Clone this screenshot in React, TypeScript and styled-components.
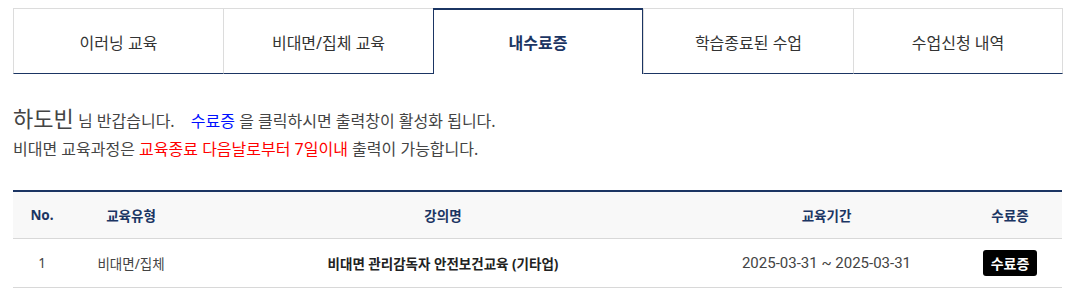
import React from 'react'
import styled, { createGlobalStyle } from 'styled-components'

const GlobalStyle = createGlobalStyle`
    body {
        margin: 0;
        background: #fff;
        font-family: "Noto Sans", "Noto Sans CJK KR", sans-serif;
        color: #333;
    }
`

const Page = styled.div`
    padding: 8px 12px 0 13px;
`

const Tabs = styled.ul`
    display: grid;
    grid-template-columns: repeat(5, 1fr);
    list-style: none;
    margin: 0;
    padding: 0;
    width: 1050px;
`

const Tab = styled.li<{ $active?: boolean }>`
    height: 66px;
    display: flex;
    align-items: center;
    justify-content: center;
    box-sizing: border-box;
    font-size: 16px;
    color: ${p => (p.$active ? '#1b3563' : '#333')};
    font-weight: ${p => (p.$active ? 700 : 400)};
    border-top: ${p => (p.$active ? '2px solid #1b3563' : '1px solid #dcdcdc')};
    border-left: 1px solid ${p => (p.$active ? '#1b3563' : '#dcdcdc')};
    border-right: ${p => (p.$active ? '1px solid #1b3563' : 'none')};
    border-bottom: ${p => (p.$active ? 'none' : '1px solid #1b3563')};
    padding-top: ${p => (p.$active ? '0' : '1px')};

    &:last-child {
        border-right: 1px solid #dcdcdc;
    }
`

const Notice = styled.div`
    margin-top: 30px;
    color: #444;
    font-size: 16px;
`

const Line = styled.p`
    margin: 0;
    line-height: 28px;
`

const Name = styled.span`
    font-size: 22px;
`

const Blue = styled.span`
    color: #0010ff;
    margin-left: 12px;
`

const Red = styled.span`
    color: #ff0000;
`

const Table = styled.table`
    margin-top: 27px;
    width: 1049px;
    border-collapse: collapse;
    border-top: 2px solid #1b3563;
    font-size: 13.5px;
`

const Th = styled.th<{ $w: number }>`
    width: ${p => p.$w}px;
    height: 46px;
    background: #f8f8f8;
    color: #1b3563;
    font-weight: 700;
    border-bottom: 1px solid #d8d8d8;
    padding: 0;
`

const Td = styled.td<{ $bold?: boolean }>`
    height: 48px;
    text-align: center;
    color: ${p => (p.$bold ? '#222' : '#444')};
    font-weight: ${p => (p.$bold ? 700 : 400)};
    border-bottom: 1px solid #d8d8d8;
    padding: 0;
`

const DateCell = styled(Td)`
    font-family: Roboto, "Noto Sans CJK KR", sans-serif;
    font-size: 15px;
    color: #444;
`

const CertButton = styled.button`
    background: #000;
    color: #fff;
    border: none;
    border-radius: 3px;
    height: 26px;
    width: 54px;
    font-family: "Noto Sans", "Noto Sans CJK KR", sans-serif;
    font-size: 14px;
    font-weight: 700;
    padding: 0;
    cursor: pointer;
`

const tabs = ['이러닝 교육', '비대면/집체 교육', '내수료증', '학습종료된 수업', '수업신청 내역']

const App = () => {
    return (
        <>
            <GlobalStyle />
            <Page>
                <Tabs>
                    {tabs.map((t, i) => (
                        <Tab key={i} $active={i === 2}>{t}</Tab>
                    ))}
                </Tabs>
                <Notice>
                    <Line>
                        <Name>하도빈</Name> 님 반갑습니다. <Blue>수료증</Blue> 을 클릭하시면 출력창이 활성화 됩니다.
                    </Line>
                    <Line>
                        비대면 교육과정은 <Red>교육종료 다음날로부터 7일이내</Red> 출력이 가능합니다.
                    </Line>
                </Notice>
                <Table>
                    <thead>
                        <tr>
                            <Th $w={58}>No.</Th>
                            <Th $w={120}>교육유형</Th>
                            <Th $w={504}>강의명</Th>
                            <Th $w={263}>교육기간</Th>
                            <Th $w={104}>수료증</Th>
                        </tr>
                    </thead>
                    <tbody>
                        <tr>
                            <Td>1</Td>
                            <Td>비대면/집체</Td>
                            <Td $bold>비대면 관리감독자 안전보건교육 (기타업)</Td>
                            <DateCell>2025-03-31 ~ 2025-03-31</DateCell>
                            <Td><CertButton>수료증</CertButton></Td>
                        </tr>
                    </tbody>
                </Table>
            </Page>
        </>
    )
}

export default App
